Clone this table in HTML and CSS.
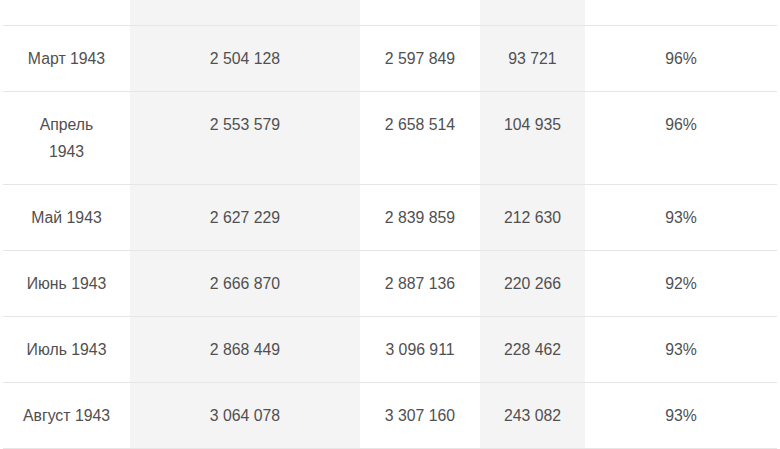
FILE: index.html
```html
<!DOCTYPE html>
<html lang="ru">
<head>
<meta charset="utf-8">
<link rel="stylesheet" href="styles.css">
</head>
<body>
<table class="data">
  <colgroup>
    <col class="c-month">
    <col class="c-a shade">
    <col class="c-b">
    <col class="c-c shade">
    <col class="c-d">
  </colgroup>
  <tbody>
    <tr class="cut"><td></td><td></td><td></td><td></td><td></td></tr>
    <tr><td>Март 1943</td><td>2 504 128</td><td>2 597 849</td><td>93 721</td><td>96%</td></tr>
    <tr><td>Апрель<br>1943</td><td>2 553 579</td><td>2 658 514</td><td>104 935</td><td>96%</td></tr>
    <tr><td>Май 1943</td><td>2 627 229</td><td>2 839 859</td><td>212 630</td><td>93%</td></tr>
    <tr><td>Июнь 1943</td><td>2 666 870</td><td>2 887 136</td><td>220 266</td><td>92%</td></tr>
    <tr><td>Июль 1943</td><td>2 868 449</td><td>3 096 911</td><td>228 462</td><td>93%</td></tr>
    <tr><td>Август 1943</td><td>3 064 078</td><td>3 307 160</td><td>243 082</td><td>93%</td></tr>
  </tbody>
</table>
</body>
</html>
```
FILE: styles.css
```css
html, body {
  margin: 0;
  padding: 0;
  background: #ffffff;
}
body {
  font-family: "Liberation Sans", Arial, sans-serif;
  color: #505050;
  overflow: hidden;
}
.data {
  margin-left: 3px;
  width: 774px;
  border-collapse: collapse;
  table-layout: fixed;
  font-size: 15.8px;
  line-height: 27px;
}
.c-month { width: 127px; }
.c-a { width: 230px; }
.c-b { width: 120px; }
.c-c { width: 105px; }
.c-d { width: 192px; }
.shade { background: #f4f4f4; }
.data td {
  padding: 19px 4px;
  text-align: center;
  vertical-align: top;
  border-bottom: 1px solid #e6e6e6;
}
.data tr.cut td {
  padding: 0;
  height: 25px;
}
```
